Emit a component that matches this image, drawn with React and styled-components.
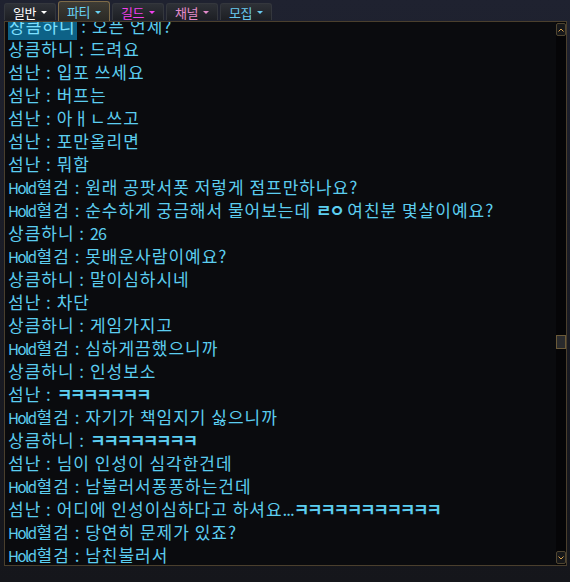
import React from 'react';
import styled, { createGlobalStyle } from 'styled-components';

const GlobalStyle = createGlobalStyle`
  html, body {
    margin: 0;
    padding: 0;
    background: #1b1d27;
  }
  * {
    box-sizing: border-box;
  }
`;

const Page = styled.div`
  width: 570px;
  height: 582px;
  display: flex;
  flex-direction: column;
  background: linear-gradient(#1f2230 0%, #1b1d27 40%, #15161b 100%);
  font-family: "Noto Sans CJK KR", "Noto Sans", sans-serif;
  overflow: hidden;
`;

const TabBar = styled.div`
  height: 21px;
  display: flex;
  align-items: flex-end;
  gap: 2px;
  padding-left: 4px;
`;

const Tab = styled.div`
  width: 52px;
  height: ${(p) => (p.$active ? '20px' : '17px')};
  margin-bottom: ${(p) => (p.$active ? '0' : '1px')};
  display: flex;
  align-items: center;
  justify-content: center;
  gap: 5px;
  border: 1px solid ${(p) => (p.$active ? '#7d6a48' : '#34373d')};
  border-bottom: none;
  border-radius: 3px 3px 0 0;
  background: ${(p) =>
    p.$active
      ? 'linear-gradient(#3e3c35, #2a2925)'
      : 'linear-gradient(#2e3137, #1d1f24)'};
  color: ${(p) => p.$color};
  font-size: 13px;
  letter-spacing: -0.5px;
  line-height: 1;
`;

const Arrow = styled.span`
  width: 0;
  height: 0;
  border-left: 3px solid transparent;
  border-right: 3px solid transparent;
  border-top: 3px solid ${(p) => p.$color};
  margin-top: 1px;
`;

const ChatBox = styled.div`
  width: 563px;
  height: 545px;
  margin-left: 4px;
  display: flex;
  border: 1px solid #4a3f2d;
  background: #0a0b0e;
`;

const Log = styled.div`
  flex: 1;
  overflow: hidden;
  padding-left: 3px;
`;

const Lines = styled.div`
  margin-top: -8px;
  display: flex;
  flex-direction: column;
`;

const Line = styled.div`
  height: 23px;
  line-height: 23px;
  font-size: 17px;
  letter-spacing: 1px;
  color: #5ccef0;
  white-space: nowrap;
`;

const Name = styled.span`
  background: ${(p) => (p.$selected ? '#0d6287' : 'transparent')};
  color: ${(p) => (p.$selected ? '#7ee0ff' : 'inherit')};
  padding: ${(p) => (p.$selected ? '2px 1px' : '0')};
`;

const Latin = styled.span`
  font-size: ${(p) => (p.$digits ? '16px' : '15px')};
  letter-spacing: ${(p) => (p.$digits ? '-0.8px' : '-1.5px')};
  margin-right: 1px;
`;

const Dots = styled.span`
  letter-spacing: -1px;
`;

const Jamo = styled.span`
  font-weight: 700;
  letter-spacing: -2.4px;
`;

const ScrollBar = styled.div`
  width: 10px;
  display: flex;
  flex-direction: column;
  padding: 1px 0 1px 0;
  background: #050507;
`;

const ScrollBtn = styled.div`
  width: 10px;
  height: 13px;
  border: 1px solid #4f4530;
  border-radius: 2px;
  background: #17181a;
  display: flex;
  align-items: center;
  justify-content: center;
`;

const Track = styled.div`
  flex: 1;
  display: flex;
  flex-direction: column;
`;

const Thumb = styled.div`
  width: 10px;
  height: 14px;
  border: 1px solid #6b5a38;
  background: #2a2b2d;
`;

const Chevron = ({ up }) => (
  <svg width="6" height="4" viewBox="0 0 6 4">
    <path
      d={up ? 'M0.5 3.5 L3 1 L5.5 3.5' : 'M0.5 0.5 L3 3 L5.5 0.5'}
      fill="none"
      stroke="#d7a04a"
      strokeWidth="1"
    />
  </svg>
);

const tabs = [
  { label: '일반', color: '#ffffff' },
  { label: '파티', color: '#67d2f4', active: true },
  { label: '길드', color: '#f240ee' },
  { label: '채널', color: '#e38bcb' },
  { label: '모집', color: '#69c9ee' },
];

const K = (n) => 'ㅋ'.repeat(n);

const messages = [
  { name: '상큼하니', text: '오픈 언제?', selected: true },
  { name: '상큼하니', text: '드려요' },
  { name: '섬난', text: '입포 쓰세요' },
  { name: '섬난', text: '버프는' },
  { name: '섬난', text: '아ㅐㄴ쓰고' },
  { name: '섬난', text: '포만올리면' },
  { name: '섬난', text: '뭐함' },
  { name: 'Hold혈검', text: '원래 공팟서폿 저렇게 점프만하나요?' },
  { name: 'Hold혈검', parts: ['순수하게 궁금해서 물어보는데 ', ['ㄹㅇ'], ' 여친분 몇살이예요?'] },
  { name: '상큼하니', text: '26' },
  { name: 'Hold혈검', text: '못배운사람이예요?' },
  { name: '상큼하니', text: '말이심하시네' },
  { name: '섬난', text: '차단' },
  { name: '상큼하니', text: '게임가지고' },
  { name: 'Hold혈검', text: '심하게끔했으니까' },
  { name: '상큼하니', text: '인성보소' },
  { name: '섬난', parts: [[K(7)]] },
  { name: 'Hold혈검', text: '자기가 책임지기 싫으니까' },
  { name: '상큼하니', parts: [[K(8)]] },
  { name: '섬난', text: '님이 인성이 심각한건데' },
  { name: 'Hold혈검', text: '남불러서퐁퐁하는건데' },
  { name: '섬난', parts: ['어디에 인성이심하다고 하셔요', '...', [K(11)]] },
  { name: 'Hold혈검', text: '당연히 문제가 있죠?' },
  { name: 'Hold혈검', text: '남친불러서' },
];

// latin letters and digits are much narrower in the game font
const withLatin = (str) =>
  str.split(/([A-Za-z0-9]+)/).map((s, i) =>
    /^[A-Za-z0-9]+$/.test(s) ? (
      <Latin key={i} $digits={/^[0-9]+$/.test(s)}>{s}</Latin>
    ) : (
      <React.Fragment key={i}>{s}</React.Fragment>
    )
  );

const renderBody = (m) => {
  if (!m.parts) return withLatin(m.text);
  return m.parts.map((p, i) => {
    if (Array.isArray(p)) return <Jamo key={i}>{p[0]}</Jamo>;
    if (p === '...') return <Dots key={i}>{p}</Dots>;
    return <React.Fragment key={i}>{p}</React.Fragment>;
  });
};

const App = () => {
  const thumbTop = 299; // scroll position of the log

  return (
    <Page>
      <GlobalStyle />
      <TabBar>
        {tabs.map((t) => (
          <Tab key={t.label} $active={t.active} $color={t.color}>
            {t.label}
            <Arrow $color={t.color} />
          </Tab>
        ))}
      </TabBar>
      <ChatBox>
        <Log>
          <Lines>
            {messages.map((m, i) => (
              <Line key={i}>
                <Name $selected={m.selected}>{withLatin(m.name)}</Name> : {renderBody(m)}
              </Line>
            ))}
          </Lines>
        </Log>
        <ScrollBar>
          <ScrollBtn>
            <Chevron up />
          </ScrollBtn>
          <Track>
            <Thumb style={{ marginTop: thumbTop }} />
          </Track>
          <ScrollBtn>
            <Chevron />
          </ScrollBtn>
        </ScrollBar>
      </ChatBox>
    </Page>
  );
};

export default App;
